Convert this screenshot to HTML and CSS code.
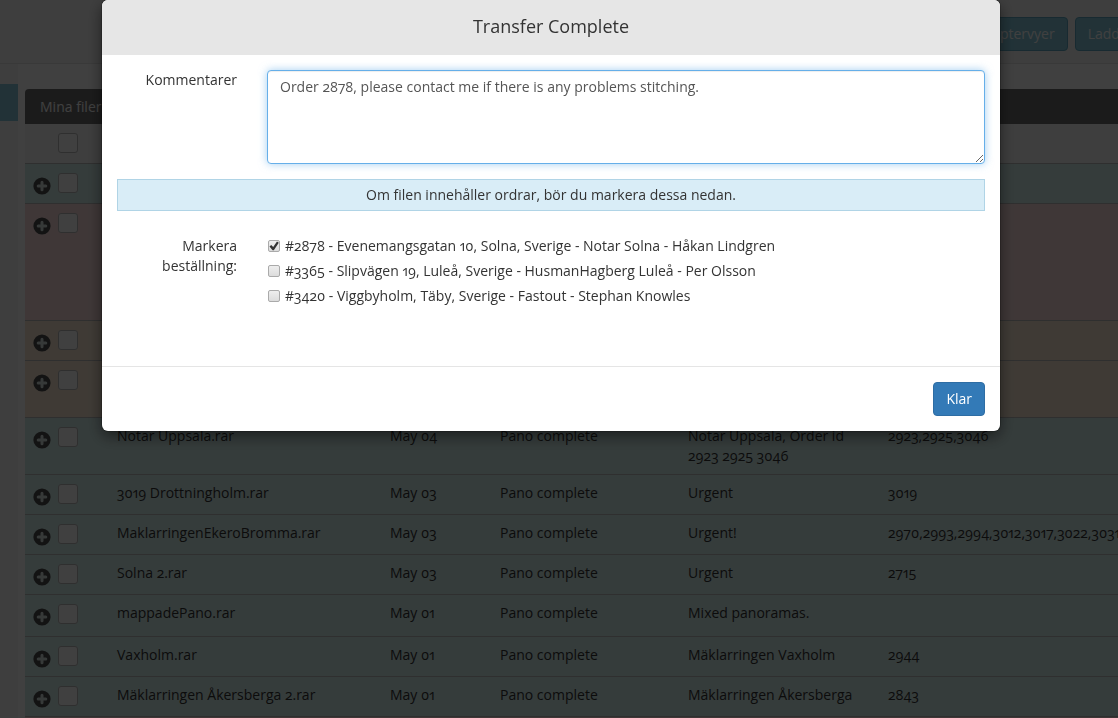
FILE: index.html
```
<!DOCTYPE html>
<html lang="sv">
<head>
<meta charset="utf-8">
<title>Mina filer</title>
<link rel="stylesheet" href="styles.css">
</head>
<body>
<svg class="sprite" aria-hidden="true">
  <symbol id="plus" viewBox="0 0 18 18">
    <circle class="plus-disc" cx="9" cy="9" r="8.6"/>
    <path class="plus-cross" d="M9 5.2v7.6M5.2 9h7.6"/>
  </symbol>
</svg>

<div class="app">
  <header class="topbar">
    <button type="button" class="btn btn-info">Konceptervyer</button>
    <button type="button" class="btn btn-info">Ladda upp</button>
  </header>
  <div class="layout">
    <nav class="sidebar"><a href="#files" class="sidebar-item" aria-label="Mina filer"></a></nav>
    <main class="content" id="files">
      <section class="panel">
        <h2 class="panel-heading">Mina filer</h2>
        <table class="files">
          <colgroup>
            <col class="col-icon"><col class="col-check"><col class="col-name"><col class="col-date"><col class="col-status"><col class="col-comment"><col>
          </colgroup>
          <thead>
            <tr><th></th><th><input type="checkbox" class="pick" aria-label="Markera alla"></th><th></th><th></th><th></th><th></th><th></th></tr>
          </thead>
          <tbody>
            <tr class="done"><td><svg class="plus"><use href="#plus"/></svg></td><td><input type="checkbox" class="pick" aria-label="Markera rad"></td><td></td><td></td><td></td><td></td><td></td></tr>
            <tr class="failed lines-5"><td><svg class="plus"><use href="#plus"/></svg></td><td><input type="checkbox" class="pick" aria-label="Markera rad"></td><td></td><td></td><td></td><td></td><td></td></tr>
            <tr class="waiting"><td><svg class="plus"><use href="#plus"/></svg></td><td><input type="checkbox" class="pick" aria-label="Markera rad"></td><td></td><td></td><td></td><td></td><td></td></tr>
            <tr class="waiting lines-2"><td><svg class="plus"><use href="#plus"/></svg></td><td><input type="checkbox" class="pick" aria-label="Markera rad"></td><td></td><td></td><td></td><td></td><td></td></tr>
            <tr class="done lines-2"><td><svg class="plus"><use href="#plus"/></svg></td><td><input type="checkbox" class="pick" aria-label="Markera rad"></td><td>Notar Uppsala.rar</td><td>May 04</td><td>Pano complete</td><td>Notar Uppsala, Order id 2923 2925 3046</td><td>2923,2925,3046</td></tr>
            <tr class="done"><td><svg class="plus"><use href="#plus"/></svg></td><td><input type="checkbox" class="pick" aria-label="Markera rad"></td><td>3019 Drottningholm.rar</td><td>May 03</td><td>Pano complete</td><td>Urgent</td><td>3019</td></tr>
            <tr class="done"><td><svg class="plus"><use href="#plus"/></svg></td><td><input type="checkbox" class="pick" aria-label="Markera rad"></td><td>MaklarringenEkeroBromma.rar</td><td>May 03</td><td>Pano complete</td><td>Urgent!</td><td>2970,2993,2994,3012,3017,3022,3031</td></tr>
            <tr class="done"><td><svg class="plus"><use href="#plus"/></svg></td><td><input type="checkbox" class="pick" aria-label="Markera rad"></td><td>Solna 2.rar</td><td>May 03</td><td>Pano complete</td><td>Urgent</td><td>2715</td></tr>
            <tr class="done roomy"><td><svg class="plus"><use href="#plus"/></svg></td><td><input type="checkbox" class="pick" aria-label="Markera rad"></td><td>mappadePano.rar</td><td>May 01</td><td>Pano complete</td><td>Mixed panoramas.</td><td></td></tr>
            <tr class="done"><td><svg class="plus"><use href="#plus"/></svg></td><td><input type="checkbox" class="pick" aria-label="Markera rad"></td><td>Vaxholm.rar</td><td>May 01</td><td>Pano complete</td><td>Mäklarringen Vaxholm</td><td>2944</td></tr>
            <tr class="done"><td><svg class="plus"><use href="#plus"/></svg></td><td><input type="checkbox" class="pick" aria-label="Markera rad"></td><td>Mäklarringen Åkersberga 2.rar</td><td>May 01</td><td>Pano complete</td><td>Mäklarringen Åkersberga</td><td>2843</td></tr>
            <tr class="failed"><td></td><td></td><td></td><td></td><td></td><td></td><td></td></tr>
          </tbody>
        </table>
      </section>
    </main>
  </div>
</div>

<div class="backdrop">
  <form class="modal" role="dialog" aria-labelledby="title">
    <h1 class="modal-header" id="title">Transfer Complete</h1>
    <div class="modal-body">
      <div class="field">
        <label class="field-label" for="comments">Kommentarer</label>
        <textarea class="comments" id="comments">Order 2878, please contact me if there is any problems stitching.</textarea>
      </div>
      <p class="notice">Om filen innehåller ordrar, bör du markera dessa nedan.</p>
      <div class="field" role="group" aria-labelledby="orders">
        <span class="field-label" id="orders">Markera beställning:</span>
        <div class="orders">
          <label class="order"><input type="checkbox" class="tick" checked>#2878 - Evenemangsgatan 10, Solna, Sverige - Notar Solna - Håkan Lindgren</label>
          <label class="order"><input type="checkbox" class="tick">#3365 - Slipvägen 19, Luleå, Sverige - HusmanHagberg Luleå - Per Olsson</label>
          <label class="order"><input type="checkbox" class="tick">#3420 - Viggbyholm, Täby, Sverige - Fastout - Stephan Knowles</label>
        </div>
      </div>
    </div>
    <footer class="modal-footer">
      <button type="button" class="btn btn-primary">Klar</button>
    </footer>
  </form>
</div>
</body>
</html>
```
FILE: styles.css
```
* { box-sizing: border-box; }

body {
  margin: 0;
  overflow: hidden;
  height: 100vh;
  background: #fff;
  color: #333;
  font: 14px/20px "Open Sans", "Noto Sans", sans-serif;
  font-variant-numeric: oldstyle-nums proportional-nums;
}

button, textarea { font: inherit; font-variant-numeric: inherit; }

.sprite { display: none; }

/* Page */
.app { min-width: 1185px; }

.topbar {
  display: flex;
  justify-content: flex-end;
  gap: 7px;
  height: 64px;
  padding: 17px 15px 0;
  background: #f5f5f5;
  border-bottom: 1px solid #e4e4e4;
}

.btn {
  height: 34px;
  padding: 0 12px;
  border: 1px solid;
  border-radius: 4px;
  color: #fff;
}

.btn-info { background: #86c8dc; border-color: #5fa9c2; }
.btn-primary { background: #337ab7; border-color: #2e6da4; }

.layout { display: flex; }

.sidebar {
  flex: 0 0 18px;
  padding-top: 20px;
  background: #f5f5f5;
  min-height: 100vh;
}

.sidebar-item { display: block; height: 37px; background: #86c8dc; }

.content { flex: 1; min-width: 0; padding: 25px 0 0 7px; }

.panel { overflow: hidden; border-radius: 4px 4px 0 0; }

.panel-heading {
  margin: 0;
  padding: 8px 15px 7px;
  background: #6e6e6e;
  color: #fff;
  font-size: 14px;
  font-weight: 400;
}

.files {
  width: 100%;
  table-layout: fixed;
  border-collapse: separate;
  border-spacing: 0;
  color: #333;
}

.col-icon { width: 33px; }
.col-check { width: 51px; }
.col-name { width: 273px; }
.col-date { width: 110px; }
.col-status { width: 188px; }
.col-comment { width: 200px; }

.files td, .files th {
  height: 40px;
  padding: 8px;
  border-top: 1px solid #bbb;
  vertical-align: top;
  text-align: left;
}

.files th { height: 39px; border-top: 0; background: #f5f5f5; }
.files th:nth-child(2), .files td:nth-child(2) { padding-left: 0; }
.done td { background: #d3edea; }
.failed td { background: #fadcdc; }
.waiting td { background: #fbe8d4; }
.files .roomy td { height: 42px; }
.files .lines-2 td { height: 57px; }
.files .lines-5 td { height: 117px; }

.plus { display: block; width: 18px; height: 18px; margin-top: 5px; }
.plus-disc { fill: #4c4c4c; }
.plus-cross { fill: none; stroke: #d8e2e0; stroke-width: 3; stroke-linecap: round; }

.pick {
  appearance: none;
  display: block;
  width: 20px;
  height: 20px;
  margin: 1px 0 0;
  border: 1px solid #bbb;
  border-radius: 3px;
  background: #fff;
}

/* Dialog */
.backdrop {
  position: fixed;
  inset: 0;
  display: flex;
  justify-content: center;
  align-items: flex-start;
  padding-right: 16px;
  background: rgba(0, 0, 0, 0.75);
}

.modal {
  width: 100%;
  max-width: 898px;
  border-radius: 6px;
  overflow: hidden;
  background: #fff;
  box-shadow: 0 0 0 1px rgba(0, 0, 0, 0.2), 0 5px 15px rgba(0, 0, 0, 0.5);
}

.modal-header {
  margin: 0;
  padding: 13px 15px 16px;
  background: #e6e6e6;
  font-size: 18px;
  font-weight: 400;
  line-height: 26px;
  text-align: center;
}

.modal-body { padding: 15px 15px 60px; }

.field { display: flex; gap: 30px; }
.field-label { flex: 0 0 120px; text-align: right; }

.comments {
  flex: 1;
  height: 94px;
  padding: 6px 12px;
  border: 1px solid #66afe9;
  border-radius: 4px;
  outline: 0;
  background: #fff;
  color: #555;
  resize: vertical;
  box-shadow: inset 0 1px 1px rgba(0, 0, 0, 0.07), 0 0 8px rgba(102, 175, 233, 0.6);
}

.notice {
  margin: 15px 0 25px;
  padding: 5px;
  border: 1px solid #b0d4e6;
  background: #d9edf7;
  text-align: center;
}

.orders { display: grid; gap: 5px; }
.order { display: flex; align-items: center; gap: 5px; }

.tick {
  appearance: none;
  display: grid;
  place-items: center;
  width: 12px;
  height: 12px;
  margin: 0 0 0 1px;
  border: 1px solid #aaa;
  border-radius: 2px;
  background: linear-gradient(#eee, #dcdcdc);
}

.tick:checked::before {
  content: "";
  width: 10px;
  height: 10px;
  background: #333;
  clip-path: polygon(5% 55%, 22% 40%, 42% 60%, 80% 5%, 98% 18%, 48% 92%, 36% 92%);
}

.modal-footer {
  display: flex;
  justify-content: flex-end;
  padding: 15px;
  border-top: 1px solid #e5e5e5;
}
```
